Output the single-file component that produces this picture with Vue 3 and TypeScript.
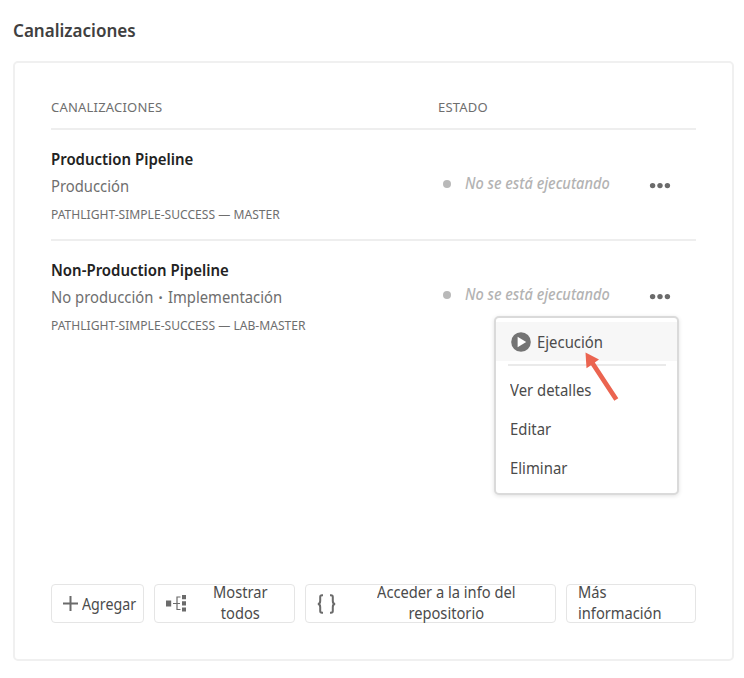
<script setup lang="ts">
interface Pipeline {
  name: string
  kind: string[]
  source: string
  menu: boolean
}

const pipelines: Pipeline[] = [
  {
    name: 'Production Pipeline',
    kind: ['Producción'],
    source: 'PATHLIGHT-SIMPLE-SUCCESS — MASTER',
    menu: false,
  },
  {
    name: 'Non-Production Pipeline',
    kind: ['No producción', 'Implementación'],
    source: 'PATHLIGHT-SIMPLE-SUCCESS — LAB-MASTER',
    menu: true,
  },
]
const actions: string[] = ['Ver detalles', 'Editar', 'Eliminar']
</script>

<template>
  <main class="page">
    <h1><span class="narrow">Canalizaciones</span></h1>
    <section class="card">
      <div class="row head">
        <span class="col-name">CANALIZACIONES</span>
        <span>ESTADO</span>
      </div>
      <div v-for="p in pipelines" :key="p.name" class="row item">
        <div class="col-name">
          <div class="name"><span class="narrow">{{ p.name }}</span></div>
          <div class="kind">
            <span class="narrow"><template v-for="(k, i) in p.kind" :key="k"><b v-if="i > 0" class="sep"> · </b>{{ k }}</template></span>
          </div>
          <div class="source"><span class="narrow">{{ p.source }}</span></div>
        </div>
        <div class="status">
          <i class="dot"></i>
          <em class="narrow">No se está ejecutando</em>
        </div>
        <button class="more" aria-label="Más">
          <svg width="22" height="8" viewBox="0 0 22 8"><circle cx="3.6" cy="3.6" r="2.7" /><circle cx="11" cy="3.6" r="2.7" /><circle cx="18.4" cy="3.6" r="2.7" /></svg>
        </button>
        <div v-if="p.menu" class="menu">
          <div class="entry active">
            <svg class="play" width="20" height="20" viewBox="0 0 20 20"><circle cx="10" cy="10" r="9.8" /><path d="M6.6 4.8v10.4l8.6-5.2z" /></svg>
            <span class="narrow">Ejecución</span>
          </div>
          <hr>
          <div v-for="a in actions" :key="a" class="entry"><span class="narrow">{{ a }}</span></div>
          <svg class="arrow" width="36" height="52" viewBox="0 0 36 52"><path d="M1.5 1.5L15 8.6L10.8 11.6L34.3 47.2L30.3 49.7L7 14.3L2.5 17.3z" /></svg>
        </div>
      </div>
      <footer class="buttons">
        <button class="btn add">
          <svg width="15" height="15" viewBox="0 0 15 15"><path d="M7.5 0v15M0 7.5h15" /></svg>
          <span class="narrow">Agregar</span>
        </button>
        <button class="btn all">
          <svg width="21" height="17" viewBox="0 0 21 17"><path class="solid" d="M0 5.5h5.2v6H0zM16 0h4v4.2h-4zM16 6.3h4v4.2h-4zM16 12.4h4v4.2h-4z" /><path class="line" d="M7 8.5h7M14.5 2H11v12.5h3.5" /></svg>
          <span class="narrow">Mostrar<br>todos</span>
        </button>
        <button class="btn repo">
          <svg width="19" height="20" viewBox="0 0 19 20"><path d="M6 1.2H5Q3.2 1.2 3.2 3v4Q3.2 10 .8 10Q3.2 10 3.2 13v4Q3.2 18.8 5 18.8H6M13 1.2h1Q15.8 1.2 15.8 3v4Q15.8 10 18.2 10Q15.8 10 15.8 13v4Q15.8 18.8 14 18.8H13" /></svg>
          <span class="narrow">Acceder a la info del<br>repositorio</span>
        </button>
        <button class="btn info"><span class="narrow">Más<br>información</span></button>
      </footer>
    </section>
  </main>
</template>

<style>
body { background: #fff; }
</style>

<style scoped>
* { box-sizing: border-box; }
.page {
  width: 744px;
  height: 678px;
  padding: 18px 10px 0 13px;
  font-family: "Noto Sans", sans-serif;
  font-size: 16px;
  color: #4b4b4b;
  overflow: hidden;
}
.narrow {
  display: inline-block;
  white-space: nowrap;
  transform: scaleX(0.93);
  transform-origin: left center;
}
h1 {
  margin: 0 0 18px;
  font-size: 18px;
  font-weight: 600;
  line-height: 25px;
  color: #404040;
}
h1 .narrow { transform: scaleX(0.947); }
.card {
  display: flex;
  flex-direction: column;
  width: 721px;
  height: 600px;
  padding: 34px 36px 36px;
  border: 2px solid #f0f0f0;
  border-radius: 5px;
}
.row { display: flex; position: relative; width: 645px; }
.head {
  height: 33px;
  border-bottom: 2px solid #eee;
  font-size: 13px;
  line-height: 21px;
  letter-spacing: 0.2px;
  color: #6e6e6e;
}
.col-name { width: 387px; }
.item { height: 111px; padding-top: 16px; }
.item + .item { height: 140px; }
.item:nth-child(2) { border-bottom: 2px solid #eee; }
.name { font-weight: 600; line-height: 26px; height: 27px; color: #222; }
.name .narrow { transform: scaleX(0.935); }
.kind { line-height: 26px; height: 28px; color: #6e6e6e; }
.kind .narrow { transform: scaleX(0.925); }
.sep { margin: 0 1.5px; font-weight: 700; white-space: pre; }
.source { font-size: 13px; line-height: 26px; color: #6e6e6e; }
.status { display: flex; align-items: center; height: 76px; padding-left: 5px; gap: 14px; width: 211px; color: #b3b3b3; }
.status em { font-weight: 500; line-height: 22px; margin-top: -2px; transform: scaleX(0.91); }
.dot { flex: none; width: 8px; height: 8px; border-radius: 50%; background: #b9b9b9; }
.more { display: flex; align-items: center; height: 79px; border: 0; padding: 0; background: none; }
.more svg { fill: #6b6b6b; }
.menu {
  position: absolute;
  left: 443px;
  top: 75px;
  width: 185px;
  height: 179px;
  padding-top: 4px;
  border: 2px solid #dadada;
  border-radius: 5px;
  background: #fff;
  box-shadow: 0 1px 4px rgba(0, 0, 0, 0.12);
}
.entry { display: flex; align-items: center; height: 39px; padding-left: 14px; }
.active { background: #f7f7f7; gap: 6px; padding-left: 15px; }
.menu hr { width: 158px; margin: 3px 0 4px 12px; border: 0; border-top: 2px solid #eaeaea; }
.play circle { fill: #747474; }
.play path { fill: #fff; }
.arrow { position: absolute; left: 88px; top: 33px; }
.arrow path { fill: #eb6450; }
.buttons { display: flex; gap: 10px; margin-top: auto; }
.btn {
  display: flex;
  align-items: center;
  height: 39px;
  padding: 0 0 0 11px;
  border: 1px solid #e5e5e5;
  border-radius: 4px;
  background: #fff;
  font: inherit;
  line-height: 21px;
  color: #4b4b4b;
  text-align: center;
}
.btn .narrow { margin-top: -1px; transform: scaleX(0.917); }
.btn svg { fill: none; stroke: #6b6b6b; stroke-width: 2; flex: none; }
.add { width: 93px; gap: 4px; }
.add .narrow { margin-top: 1px; transform: scaleX(0.89); }
.all { width: 141px; }
.btn .solid { fill: #6b6b6b; stroke: none; }
.btn .line { stroke-width: 1.2; }
.all span { margin-left: 26px; }
.repo { width: 252px; }
.repo span { margin-left: 41px; }
.info { width: 130px; }
.info .narrow { text-align: left; }
</style>
